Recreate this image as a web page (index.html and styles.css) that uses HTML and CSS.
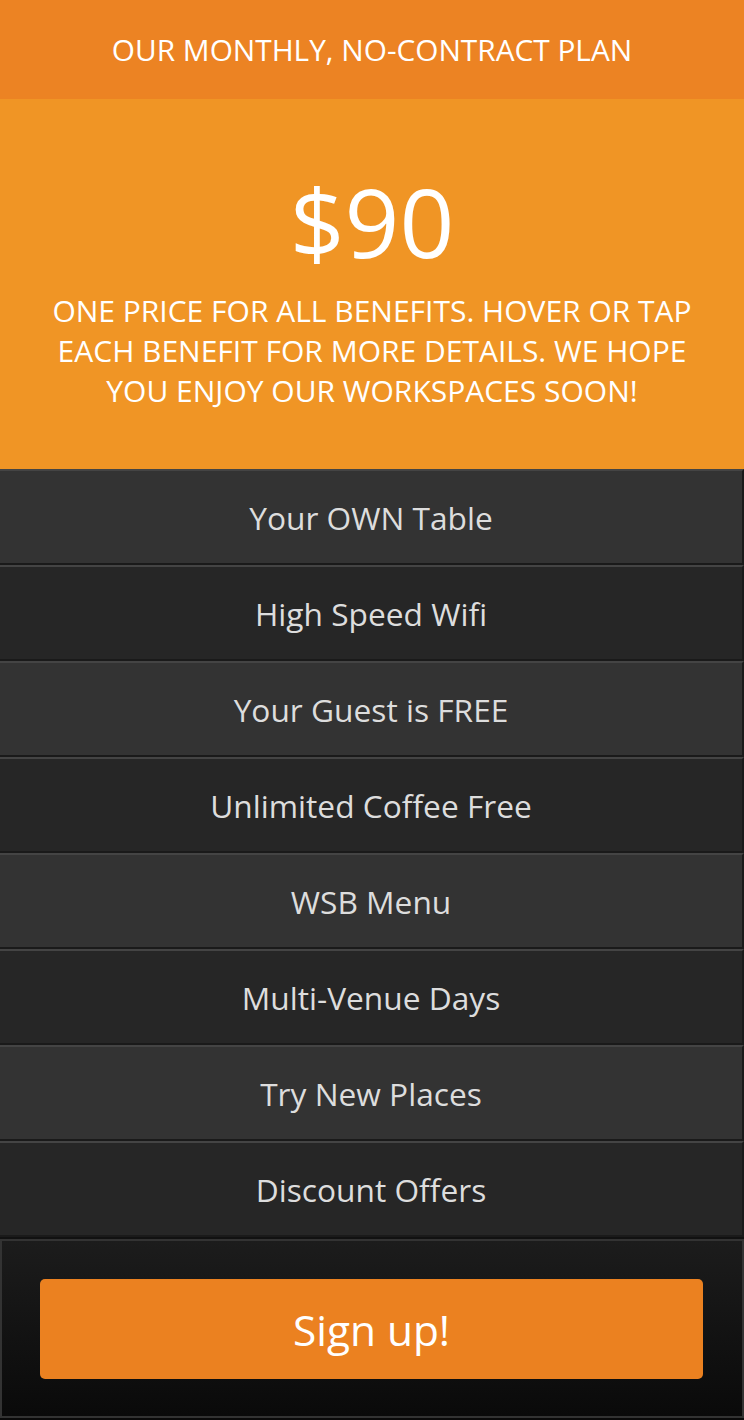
FILE: index.html
```html
<!DOCTYPE html>
<html>
<head>
<meta charset="utf-8">
<link rel="stylesheet" href="styles.css">
</head>
<body>
<div class="plan">
  <div class="plan-head">OUR MONTHLY, NO-CONTRACT PLAN</div>
  <div class="plan-price">
    <div class="amount">$90</div>
    <p class="desc">ONE PRICE FOR ALL BENEFITS. HOVER OR TAP EACH BENEFIT FOR MORE DETAILS. WE HOPE YOU ENJOY OUR WORKSPACES SOON!</p>
  </div>
  <ul class="benefits">
    <li class="benefit odd">Your OWN Table</li>
    <li class="benefit even">High Speed Wifi</li>
    <li class="benefit odd">Your Guest is FREE</li>
    <li class="benefit even">Unlimited Coffee Free</li>
    <li class="benefit odd">WSB Menu</li>
    <li class="benefit even">Multi-Venue Days</li>
    <li class="benefit odd">Try New Places</li>
    <li class="benefit even">Discount Offers</li>
  </ul>
  <div class="plan-foot">
    <div class="foot-inner">
      <a class="signup">Sign up!</a>
    </div>
  </div>
</div>
</body>
</html>
```
FILE: styles.css
```css
html, body {
  margin: 0;
  padding: 0;
  background: #0a0a0a;
}
body {
  font-family: "Open Sans", "DejaVu Sans", sans-serif;
}
.plan {
  width: 744px;
}
.plan-head {
  height: 99px;
  background: #ec8323;
  color: #fff;
  font-size: 29.8px;
  display: flex;
  align-items: center;
  justify-content: center;
}
.plan-price {
  height: 370px;
  box-sizing: border-box;
  background: #f09525;
  color: #fff;
  text-align: center;
  padding-top: 62px;
}
.amount {
  font-size: 96px;
  line-height: 120px;
}
.desc {
  margin: 10px 40px 0;
  font-size: 30px;
  line-height: 40px;
}
.benefits {
  list-style: none;
  margin: 0;
  padding: 0;
}
.benefit {
  height: 92px;
  border-top: 2px solid #444;
  border-bottom: 2px solid #1a1a1a;
  border-right: 2px solid #1a1a1a;
  color: #ddd;
  font-size: 31.7px;
  display: flex;
  align-items: center;
  justify-content: center;
}
.odd { background: #333; }
.even { background: #262626; }
.plan-foot {
  border-top: 2px solid #111;
}
.foot-inner {
  border: 2px solid #333;
  background: linear-gradient(#1c1c1c, #0a0a0a);
  padding: 38px 39px 37px 38px;
}
.signup {
  display: flex;
  align-items: center;
  justify-content: center;
  height: 100px;
  background: #eb8120;
  border-radius: 5px;
  color: #fff;
  font-size: 42.4px;
}
```
